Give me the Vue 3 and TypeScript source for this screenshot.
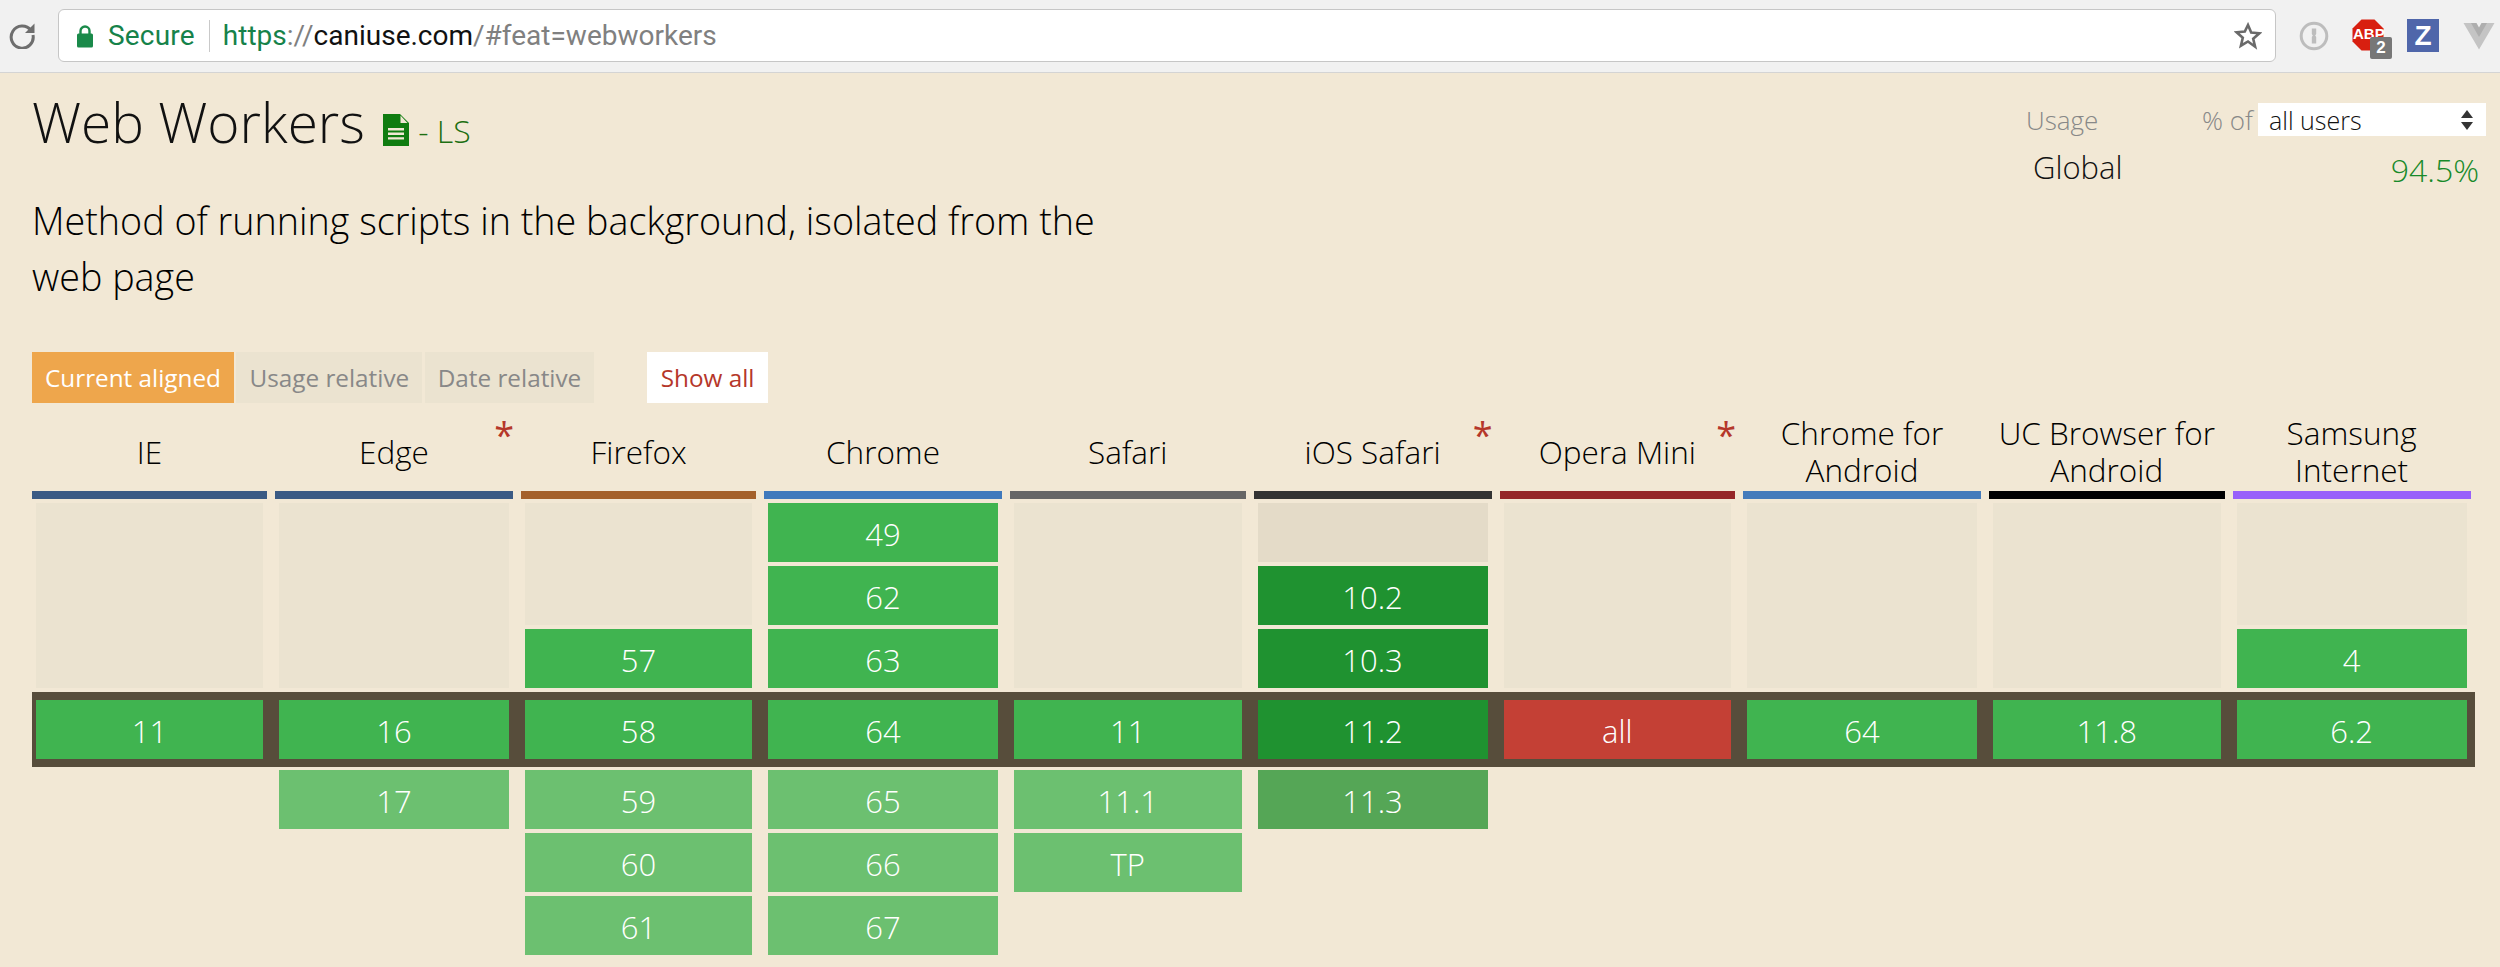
<script setup lang="ts">
interface Cell { label: string; kind: string; row: number; span?: number }
interface Browser { name: string; color: string; note?: boolean; cells: Cell[] }

const past = (label: string, row: number, kind = 'y'): Cell => ({ label, kind, row })
const empty = (row: number, span: number, kind = 'none'): Cell => ({ label: '', kind, row, span })

const browsers: Browser[] = [
  { name: 'IE', color: '#3a5a84', cells: [empty(3, 3), past('11', 6)] },
  { name: 'Edge', color: '#3a5a84', note: true, cells: [empty(3, 3), past('16', 6), past('17', 7, 'f')] },
  { name: 'Firefox', color: '#a4602a', cells: [empty(3, 2), past('57', 5), past('58', 6), past('59', 7, 'f'), past('60', 8, 'f'), past('61', 9, 'f')] },
  { name: 'Chrome', color: '#4079bc', cells: [past('49', 3), past('62', 4), past('63', 5), past('64', 6), past('65', 7, 'f'), past('66', 8, 'f'), past('67', 9, 'f')] },
  { name: 'Safari', color: '#666666', cells: [empty(3, 3), past('11', 6), past('11.1', 7, 'f'), past('TP', 8, 'f')] },
  { name: 'iOS Safari', color: '#333333', note: true, cells: [empty(3, 1, 'old'), past('10.2', 4, 'd'), past('10.3', 5, 'd'), past('11.2', 6, 'd'), past('11.3', 7, 'p')] },
  { name: 'Opera Mini', color: '#952628', note: true, cells: [empty(3, 3), past('all', 6, 'n')] },
  { name: 'Chrome for Android', color: '#447bbb', cells: [empty(3, 3), past('64', 6)] },
  { name: 'UC Browser for Android', color: '#000000', cells: [empty(3, 3), past('11.8', 6)] },
  { name: 'Samsung Internet', color: '#9860fa', cells: [empty(3, 2), past('4', 5), past('6.2', 6)] },
]

function place(col: number, row: number, span = 1) {
  return { gridColumn: col + 1, gridRow: `${row} / span ${span}` }
}
</script>

<template>
  <div class="page">
    <header class="toolbar">
      <svg class="reload" viewBox="0 0 28 28" width="28" height="28">
        <path d="M23 9.5A11 11 0 1 0 25 14" fill="none" stroke="#6e6e6e" stroke-width="3" />
        <path d="M26.5 2.5V12H17Z" fill="#6e6e6e" />
      </svg>
      <div class="omnibox">
        <svg class="lock" viewBox="0 0 18 24" width="18" height="24">
          <path d="M4.5 10V7a4.5 4.5 0 0 1 9 0v3" fill="none" stroke="#1a8a4a" stroke-width="2.4" />
          <rect x="1" y="9.5" width="16" height="14" rx="1.5" fill="#1a8a4a" />
        </svg>
        <span class="secure">Secure</span>
        <span class="divider"></span>
        <span class="url"><span class="scheme">https</span><span class="dim">://</span><span class="host">caniuse.com</span><span class="dim">/#feat=webworkers</span></span>
        <svg class="star" viewBox="0 0 28 28" width="28" height="28">
          <path d="M14 3l3.2 7.6 8.2.7-6.2 5.4 1.9 8L14 19.5l-7.1 4.2 1.9-8-6.2-5.4 8.2-.7z" fill="none" stroke="#6a6a6a" stroke-width="2.6" stroke-linejoin="miter" />
        </svg>
      </div>
      <div class="extensions">
        <svg class="ext-pass" viewBox="0 0 30 30" width="30" height="30">
          <circle cx="15" cy="15" r="12.8" fill="none" stroke="#bdbdbd" stroke-width="3" />
          <path d="M12.8 7.5h4.4v5.5l-1 1.5 1 1.5v6.5h-4.4v-6.5l1-1.5-1-1.5z" fill="#bdbdbd" />
        </svg>
        <div class="ext-abp">
          <svg viewBox="0 0 32 32" width="32" height="32">
            <path d="M9.5 0.5h13l9 9v13l-9 9h-13l-9-9v-13z" fill="#d81f10" />
          </svg>
          <span class="abp-text">ABP</span>
          <span class="abp-badge">2</span>
        </div>
        <div class="ext-z">Z</div>
        <svg class="ext-v" viewBox="0 0 32 28" width="32" height="28">
          <path d="M0.5 1H10L16 11.5 22 1h9.5L16 27.5Z" fill="#c4c4c4" />
          <path d="M8 1h5.5L16 5.5 18.5 1H24L16 15Z" fill="#aeaeae" />
        </svg>
      </div>
    </header>

    <main class="content">
      <section class="intro">
        <div class="summary">
          <h1 class="title">Web Workers
            <svg class="doc" viewBox="0 0 26 32" width="26" height="32">
              <path d="M0 0H17L26 9V32H0Z" fill="#107c10" />
              <path d="M17.5 1.5L24.5 9H17.5Z" fill="#f2e8d5" />
              <path d="M5 14h16v2.4H5zM5 18.6h16V21H5zM5 23.2h16v2.4H5z" fill="#f2e8d5" />
            </svg>
            <span class="status">- LS</span>
          </h1>
          <p class="description">Method of running scripts in the background, isolated from the web page</p>
        </div>
        <div class="usage">
          <div class="usage-head">
            <span class="usage-label">Usage</span>
            <span class="usage-of">% of</span>
            <div class="select">
              <span>all users</span>
              <svg viewBox="0 0 14 22" width="14" height="22">
                <path d="M7 1l6 8H1zM7 21l-6-8h12z" fill="#333" />
              </svg>
            </div>
          </div>
          <div class="usage-row">
            <span class="global">Global</span>
            <span class="percent">94.5%</span>
          </div>
        </div>
      </section>

      <nav class="modes">
        <span class="mode active">Current aligned</span>
        <span class="mode">Usage relative</span>
        <span class="mode">Date relative</span>
        <span class="show-all">Show all</span>
      </nav>

      <section class="table">
        <div class="band"></div>
        <template v-for="(b, i) in browsers" :key="b.name">
          <div class="head" :style="place(i, 1)">
            <span class="head-name">{{ b.name }}</span>
            <span v-if="b.note" class="note">*</span>
          </div>
          <div class="bar" :style="{ ...place(i, 2), background: b.color }"></div>
          <div
            v-for="c in b.cells"
            :key="c.row"
            class="cell"
            :class="['k-' + c.kind, { current: c.row === 6 }]"
            :style="place(i, c.row, c.span)"
          >{{ c.label }}</div>
        </template>
      </section>
    </main>
  </div>
</template>

<style>
html, body { margin: 0; background: #f2e8d5; }
</style>

<style scoped>
.page {
  width: 2500px;
  height: 967px;
  overflow: hidden;
  background: #f2e8d5;
  font-family: "Open Sans", "Liberation Sans", sans-serif;
}
.toolbar {
  height: 73px;
  box-sizing: border-box;
  background: #f1f1f1;
  border-bottom: 1px solid #d4d4d4;
  display: flex;
  align-items: flex-start;
  padding: 9px 0 0 8px;
}
.reload { margin: 12px 22px 0 0; flex: none; }
.omnibox {
  width: 2218px;
  height: 53px;
  box-sizing: border-box;
  background: #fff;
  border: 1px solid #c6c6c6;
  border-radius: 6px;
  display: flex;
  align-items: center;
  padding-left: 17px;
  font-family: Roboto, "Liberation Sans", sans-serif;
  font-size: 28px;
  flex: none;
}
.lock { flex: none; }
.secure { color: #16824a; margin-left: 14px; letter-spacing: 0.2px; }
.divider { width: 1px; height: 32px; background: #c9c9c9; margin: 0 13px 0 14px; }
.url { flex: 1; white-space: nowrap; }
.scheme { color: #16824a; }
.dim { color: #808080; }
.host { color: #111; }
.star { margin-right: 13px; flex: none; }
.extensions {
  position: relative;
  display: flex;
  align-items: flex-start;
  padding-top: 10px;
  margin-left: 23px;
}
.ext-pass { margin-top: 2px; flex: none; }
.ext-abp { position: relative; width: 32px; height: 32px; margin-left: 23px; flex: none; }
.ext-abp svg { display: block; }
.abp-text {
  position: absolute;
  left: 1px;
  top: 7px;
  color: #fff;
  font: 700 15px/16px "Liberation Sans", sans-serif;
}
.abp-badge {
  position: absolute;
  left: 18px;
  top: 18px;
  width: 22px;
  height: 22px;
  background: #777;
  border-radius: 2px;
  color: #fff;
  text-align: center;
  font: 700 17px/22px "Liberation Sans", sans-serif;
}
.ext-z {
  width: 32px;
  height: 33px;
  margin-left: 23px;
  background: #4f66aa;
  color: #fff;
  text-align: center;
  font: 700 28px/33px "Liberation Sans", sans-serif;
  flex: none;
}
.ext-v { margin: 3px 0 0 24px; flex: none; }

.content { padding: 0 0 0 32px; }
.intro { display: flex; justify-content: space-between; height: 279px; box-sizing: border-box; }
.summary { width: 1110px; }
.title {
  margin: 13px 0 0;
  font-size: 55px;
  font-weight: 300;
  line-height: 72px;
  color: #111;
  white-space: nowrap;
}
.doc { margin-left: 4px; vertical-align: -3px; }
.status { font-size: 32px; color: #1d6f12; margin-left: 9px; }
.description {
  margin: 26px 0 0;
  font-size: 37.7px;
  font-weight: 300;
  line-height: 56px;
  color: #000;
}
.usage { width: 460px; margin-right: 14px; padding-top: 30px; box-sizing: border-box; font-weight: 300; }
.usage-head { display: flex; align-items: center; height: 33px; font-size: 26px; color: #888; }
.usage-label { width: 176px; }
.usage-of { width: 56px; }
.select {
  width: 228px;
  height: 33px;
  box-sizing: border-box;
  background: #fff;
  color: #111;
  padding: 0 12px 0 11px;
  display: flex;
  align-items: center;
  justify-content: space-between;
  font-size: 25px;
}
.usage-row { display: flex; justify-content: space-between; margin-top: 9px; }
.global { font-size: 31px; color: #111; margin-left: 7px; line-height: 44px; }
.percent { font-size: 32px; color: #188a2a; margin: 3px 7px 0 0; line-height: 44px; }

.modes { display: flex; align-items: stretch; height: 51px; font-size: 24.3px; line-height: 51px; }
.mode { background: #ebe3d0; color: #888; padding: 0 13px; margin-right: 2.5px; white-space: nowrap; }
.mode.active { background: #eea64c; color: #fff; }
.show-all { background: #fff; color: #b5372a; padding: 0 14px; margin-left: 50px; white-space: nowrap; }

.table {
  position: relative;
  display: grid;
  grid-template-columns: 243px 246px 243px 246px 243.5px 246.1px 243.4px 246px 243.6px 246px;
  grid-template-rows: 88px 10px 63px 63px 63px 78px 63px 63px 63px;
}
.band {
  grid-column: 1 / -1;
  grid-row: 6;
  margin: 2px 4px 1px 0;
  background: #574d3b;
}
.head {
  position: relative;
  display: flex;
  align-items: center;
  justify-content: center;
  text-align: center;
  margin-right: 8px;
  padding: 8px 0 0;
  box-sizing: border-box;
  font-size: 31.5px;
  font-weight: 300;
  line-height: 37px;
  color: #000;
}
.head-name { display: block; padding: 0 8px; }
.note {
  position: absolute;
  right: -1px;
  top: 14px;
  color: #b5372a;
  font-size: 36px;
  font-weight: 400;
  line-height: 36px;
}
.bar { margin-right: 8px; height: 8px; }
.cell {
  margin: 2px 12px 2px 4px;
  height: 59px;
  box-sizing: border-box;
  padding-top: 2px;
  display: flex;
  align-items: center;
  justify-content: center;
  color: #fff;
  font-size: 31px;
  font-weight: 300;
  z-index: 1;
}
.cell.current { margin: 10px 12px 9px 4px; }
.k-none, .k-old { height: auto; }
.k-none { background: #ebe3d0; }
.k-old { background: #e4dbc8; }
.k-y { background: #40b450; }
.k-d { background: #1f9230; }
.k-f { background: #6cc070; }
.k-p { background: #55a656; }
.k-n { background: #c44035; }
</style>
